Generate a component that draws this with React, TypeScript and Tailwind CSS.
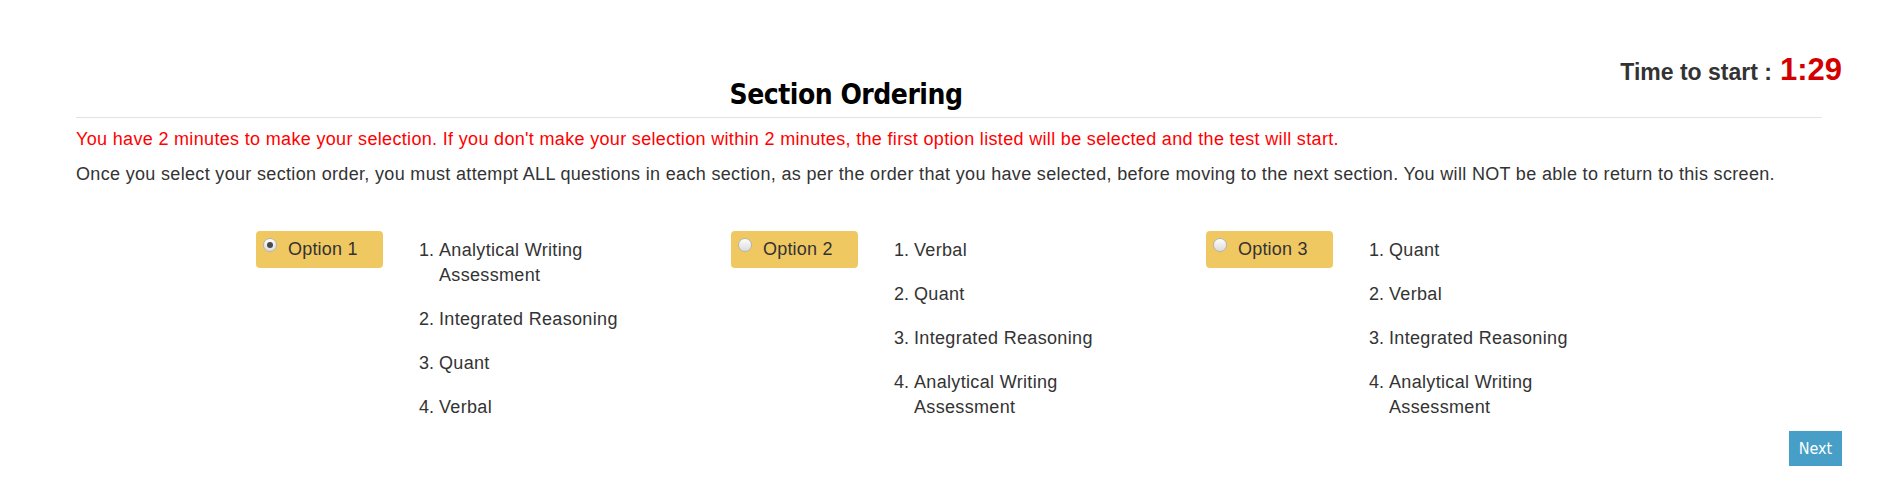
import React, { useState } from 'react';

const options = [
  { label: 'Option 1', sections: ['Analytical Writing Assessment', 'Integrated Reasoning', 'Quant', 'Verbal'] },
  { label: 'Option 2', sections: ['Verbal', 'Quant', 'Integrated Reasoning', 'Analytical Writing Assessment'] },
  { label: 'Option 3', sections: ['Quant', 'Verbal', 'Integrated Reasoning', 'Analytical Writing Assessment'] },
];

function Radio({ checked }: { checked: boolean }) {
  return (
    <span className="w-[14px] h-[14px] shrink-0 rounded-full border border-[#b4b4b4] bg-gradient-to-b from-[#fdfdfd] to-[#dcdcdc] flex items-center justify-center">
      {checked && <span className="w-[6px] h-[6px] rounded-full bg-[#4a4a4a]" />}
    </span>
  );
}

export default function App() {
  const [selected, setSelected] = useState(0);

  return (
    <div className="min-h-screen bg-white pl-[76px] pr-[58px] font-['Liberation_Sans',Arial,sans-serif] text-[#333]">
      {/* Header */}
      <div className="flex items-start h-[117px]">
        <h1 className="w-[1540px] shrink-0 text-center mt-[79px] text-[28px] leading-[32px] font-bold text-black font-['DejaVu_Sans_Condensed','DejaVu_Sans',sans-serif] tracking-[-0.5px]">
          Section Ordering
        </h1>
        <div className="flex-1 flex justify-end items-baseline whitespace-nowrap mt-[53px] leading-[34px]">
          <span className="text-[23px] font-bold text-[#333]">Time to start :</span>
          <span className="ml-[8px] text-[31px] font-bold text-[#d40000]">1:29</span>
        </div>
      </div>
      <div className="border-t border-[#e3e3e3] mr-[20px]" />

      {/* Instructions */}
      <p className="mt-[9px] text-[18px] tracking-[0.33px] leading-[24px] text-[#ff0000]">
        You have 2 minutes to make your selection. If you don't make your selection within 2 minutes, the first option listed will be selected and the test will start.
      </p>
      <p className="mt-[11px] text-[18px] tracking-[0.33px] leading-[24px] text-[#333]">
        Once you select your section order, you must attempt ALL questions in each section, as per the order that you have selected, before moving to the next section. You will NOT be able to return to this screen.
      </p>

      {/* Options */}
      <div className="flex mt-[45px] pl-[180px]">
        {options.map((opt, i) => (
          <div key={i} className="w-[475px] flex items-start">
            <button
              onClick={() => setSelected(i)}
              className="w-[127px] h-[37px] shrink-0 rounded-[4px] bg-[#f0c862] flex items-start pt-[7px] pl-[7px] text-left"
            >
              <Radio checked={selected === i} />
              <span className="ml-[11px] -mt-[1px] text-[18px] tracking-[0.2px] leading-[24px] text-[#333]">{opt.label}</span>
            </button>
            <ol className="ml-[36px] pt-[7px] text-[18px] tracking-[0.33px] leading-[25px] text-[#333]">
              {opt.sections.map((s, j) => (
                <li key={j} className={`flex ${j < 3 ? 'mb-[19px]' : ''}`}>
                  <span className="w-[20px] shrink-0 tracking-normal">{j + 1}.</span>
                  <span className="w-[200px]">{s}</span>
                </li>
              ))}
            </ol>
          </div>
        ))}
      </div>

      {/* Next */}
      <div className="flex justify-end mt-[11px]">
        <button className="w-[53px] h-[35px] bg-[#479fc8] text-white text-[16px] font-['DejaVu_Sans_Condensed','DejaVu_Sans',sans-serif]">
          Next
        </button>
      </div>
    </div>
  );
}
